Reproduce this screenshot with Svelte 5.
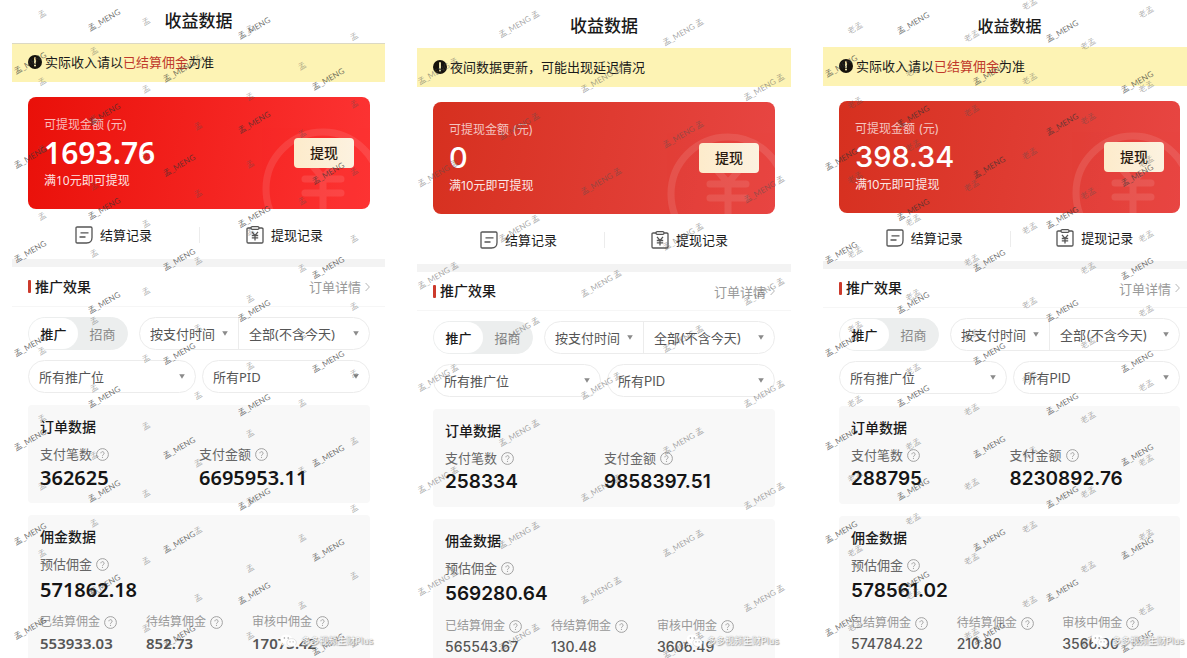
<script lang="ts">
  type MarkSet = {
    text: string;
    tone: 'dark' | 'mid' | 'light';
    x: number;
    y: number;
    cols: number;
    stepX: number;
    stepY: number;
    row: number;
  };

  type Panel = {
    id: string;
    notice: string[];
    balance: string;
    orders: string;
    paid: string;
    estimated: string;
    commissions: { label: string; value: string }[];
    marks: MarkSet[];
  };

  const commissions = (settled: string, pending: string, review: string) => [
    { label: '已结算佣金', value: settled },
    { label: '待结算佣金', value: pending },
    { label: '审核中佣金', value: review }
  ];

  const settledNotice = ['实际收入请以', '已结算佣金', '为准'];

  const panels: Panel[] = [
    {
      id: 'first',
      notice: settledNotice,
      balance: '1693.76',
      orders: '362625',
      paid: '6695953.11',
      estimated: '571862.18',
      commissions: commissions('553933.03', '852.73', '17073.42'),
      marks: [
        { text: '孟_MENG', tone: 'dark', x: 92, y: 20, cols: 2, stepX: 150, stepY: 8, row: 94.2 },
        { text: '孟_MENG', tone: 'dark', x: 18, y: 63, cols: 3, stepX: 149, stepY: 8, row: 94.2 },
        { text: '孟', tone: 'light', x: 30, y: 14, cols: 4, stepX: 104, stepY: 7.5, row: 67.4 },
        { text: '孟', tone: 'light', x: 82, y: 51, cols: 3, stepX: 104, stepY: 7.5, row: 67.4 }
      ]
    },
    {
      id: 'second',
      notice: ['夜间数据更新，可能出现延迟情况'],
      balance: '0',
      orders: '258334',
      paid: '9858397.51',
      estimated: '569280.64',
      commissions: commissions('565543.67', '130.48', '3606.49'),
      marks: [
        { text: '孟_MENG 孟', tone: 'mid', x: 102, y: 24, cols: 2, stepX: 164, stepY: 8, row: 102.2 },
        { text: '孟_MENG 孟', tone: 'mid', x: 21, y: 71, cols: 3, stepX: 163, stepY: 8, row: 102.2 }
      ]
    },
    {
      id: 'third',
      notice: settledNotice,
      balance: '398.34',
      orders: '288795',
      paid: '8230892.76',
      estimated: '578561.02',
      commissions: commissions('574784.22', '210.80', '3566.90'),
      marks: [
        { text: '孟_MENG', tone: 'dark', x: 90, y: 23, cols: 2, stepX: 149, stepY: 8, row: 93.2 },
        { text: '孟_MENG', tone: 'dark', x: 18, y: 66, cols: 3, stepX: 148, stepY: 8, row: 93.2 },
        { text: '老孟', tone: 'light', x: 32, y: 28, cols: 3, stepX: 116.5, stepY: 8, row: 74.7 },
        { text: '老孟', tone: 'light', x: 90, y: -4, cols: 3, stepX: 116.5, stepY: 8, row: 74.7 }
      ]
    }
  ];

  let tabs: Record<string, string> = $state({ first: '推广', second: '推广', third: '推广' });
  let pageHeight = $state(0);

  // only keep marks that fit inside the panel
  function placeMarks(set: MarkSet, height: number) {
    const points: { x: number; y: number }[] = [];
    for (let r = 0; r * set.row < height; r++) {
      for (let c = 0; c < set.cols; c++) {
        const y = set.y + c * set.stepY + r * set.row;
        if (y > 3 && y < height - 8) {
          points.push({ x: set.x + c * set.stepX, y });
        }
      }
    }
    return points;
  }
</script>

{#snippet help(size: number)}
  <svg class="help" width={size} height={size} viewBox="0 0 13 13" aria-hidden="true">
    <circle cx="6.5" cy="6.5" r="5.9" fill="none" stroke="currentColor" stroke-width="0.9" />
    <path d="M4.9 5.3a1.6 1.6 0 1 1 2.5 1.3c-.6.4-.9.6-.9 1.2" fill="none" stroke="currentColor" stroke-width="0.9" />
    <circle cx="6.5" cy="9.3" r="0.6" fill="currentColor" />
  </svg>
{/snippet}

{#snippet picker(label: string, value: string)}
  <span class="picker">
    <select aria-label={label}>
      <option>{value}</option>
    </select>
    <svg class="caret" width="6" height="5" viewBox="0 0 6 5" aria-hidden="true">
      <path d="M0.2 0.3h5.6L3 4.8z" fill="#8a8a8a" />
    </svg>
  </span>
{/snippet}

<main class="page" bind:clientHeight={pageHeight}>
  {#each panels as panel (panel.id)}
    <section class="panel panel-{panel.id}">
      <h1 class="title">收益数据</h1>

      <div class="notice">
        <svg width="14" height="14" viewBox="0 0 14 14" aria-hidden="true">
          <circle cx="7" cy="7" r="7" fill="#15120c" />
          <path d="M7 3v5" stroke="#fdf3b8" stroke-width="1.8" stroke-linecap="round" />
          <circle cx="7" cy="10.6" r="1" fill="#fdf3b8" />
        </svg>
        <p>{#each panel.notice as part, i}<span class:accent={i === 1}>{part}</span>{/each}</p>
      </div>

      <div class="wallet">
        <svg class="coin" width="124" height="124" viewBox="0 0 124 124" aria-hidden="true">
          <circle cx="62" cy="62" r="57" fill="none" stroke="#fff" stroke-width="7" />
          <path d="M43 29l19 22 19-22M44 52h36M44 66h36M62 52v38" fill="none" stroke="#fff" stroke-width="7" stroke-linecap="round" />
        </svg>
        <div class="wallet-text">
          <p class="wallet-label">可提现金额 (元)</p>
          <p class="balance">{panel.balance}</p>
          <p class="wallet-hint">满10元即可提现</p>
        </div>
        <button type="button" class="withdraw">提现</button>
      </div>

      <nav class="links">
        <a href="#settlements">
          <svg width="18" height="18" viewBox="0 0 18 18" fill="none" stroke="#555" stroke-width="1.3" aria-hidden="true">
            <path d="M2.2 1h13.6q1.2 0 1.2 1.2v9.3q0 5.5-5.5 5.5H2.2Q1 17 1 15.8V2.2Q1 1 2.2 1z" />
            <path d="M5.5 6.8h8M4.5 11h6" />
          </svg>
          结算记录
        </a>
        <a href="#withdrawals">
          <svg width="18" height="18" viewBox="0 0 18 18" fill="none" stroke="#555" stroke-width="1.3" aria-hidden="true">
            <path d="M5 2H2.2Q1 2 1 3.2v12.6Q1 17 2.2 17h13.6q1.2 0 1.2-1.2V3.2Q17 2 15.8 2H13" />
            <rect x="5" y="0.7" width="8" height="2.6" rx="1.2" />
            <path d="M6 5.8l3 3.6 3-3.6M5.8 9.5h6.4M5.8 11.8h6.4M9 9.4v5" />
          </svg>
          提现记录
        </a>
      </nav>

      <header class="section-head">
        <h2>推广效果</h2>
        <a href="#orders">
          订单详情
          <svg width="5" height="10" viewBox="0 0 5 10" fill="none" stroke="#b5b5b5" aria-hidden="true">
            <path d="M0.6 1L4.4 5 0.6 9" />
          </svg>
        </a>
      </header>

      <div class="filters">
        <div class="filter-row">
          <div class="tabs">
            {#each ['推广', '招商'] as name}
              <button type="button" class:active={tabs[panel.id] === name} aria-pressed={tabs[panel.id] === name} onclick={() => (tabs[panel.id] = name)}>
                {name}
              </button>
            {/each}
          </div>
          <div class="pill range">
            {@render picker('时间类型', '按支付时间')}
            {@render picker('时间范围', '全部(不含今天)')}
          </div>
        </div>
        <div class="filter-row halves">
          <div class="pill">{@render picker('推广位', '所有推广位')}</div>
          <div class="pill">{@render picker('PID', '所有PID')}</div>
        </div>
      </div>

      <article class="card">
        <h3>订单数据</h3>
        <dl class="two">
          <div>
            <dt>支付笔数{@render help(13)}</dt>
            <dd>{panel.orders}</dd>
          </div>
          <div>
            <dt>支付金额{@render help(13)}</dt>
            <dd>{panel.paid}</dd>
          </div>
        </dl>
      </article>

      <article class="card card-last">
        <h3>佣金数据</h3>
        <dl class="one">
          <div>
            <dt>预估佣金{@render help(13)}</dt>
            <dd>{panel.estimated}</dd>
          </div>
        </dl>
        <dl class="three">
          {#each panel.commissions as item}
            <div>
              <dt>{item.label}{@render help(13)}</dt>
              <dd>{item.value}</dd>
            </div>
          {/each}
        </dl>
      </article>

      <svg class="marks" aria-hidden="true">
        {#each panel.marks as set}
          {#each placeMarks(set, pageHeight) as p}
            <text class={set.tone} transform="translate({p.x} {p.y}) rotate(-30)" text-anchor="middle" dominant-baseline="central">{set.text}</text>
          {/each}
        {/each}
      </svg>

      <p class="brand">
        <svg width="17" height="14" viewBox="0 0 17 14" aria-hidden="true">
          <ellipse cx="6.3" cy="5.3" rx="5.8" ry="4.9" fill="#fff" />
          <path d="M2.6 8.6L2 11.6l3-1.6z" fill="#fff" />
          <circle cx="4.4" cy="4" r="0.8" fill="#999" />
          <circle cx="8.2" cy="4" r="0.8" fill="#999" />
          <ellipse cx="11.6" cy="8.6" rx="4.8" ry="4" fill="#fff" stroke="#ccc" stroke-width="0.5" />
          <path d="M13.4 11.8l2 1.6-.4-2.8z" fill="#fff" />
          <circle cx="10" cy="7.8" r="0.6" fill="#999" />
          <circle cx="13.1" cy="7.8" r="0.6" fill="#999" />
        </svg>
        多多视频生财Plus
      </p>
    </section>
  {/each}
</main>

<style>
  :global(body) {
    margin: 0;
    background: #fff;
  }
  .page {
    display: grid;
    grid-template-columns: 373fr 374fr 364fr;
    column-gap: 32px;
    padding-left: 12px;
    min-height: 100vh;
    font-family: 'Noto Sans', 'Noto Sans CJK SC', sans-serif;
    color: #1a1a1a;
  }
  .page * {
    box-sizing: border-box;
  }
  h1,
  h2,
  h3,
  p,
  dl,
  dd {
    margin: 0;
  }
  a {
    color: inherit;
    text-decoration: none;
  }
  button,
  select {
    margin: 0;
    padding: 0;
    border: 0;
    background: none;
    color: inherit;
    font: inherit;
    cursor: pointer;
  }

  .panel {
    --head: 43px;
    --links: 50px;
    --section: 40px;
    --right: 15px;
    --from: #e91009;
    --to: #fd3434;
    position: relative;
    display: flex;
    flex-direction: column;
    min-width: 0;
    overflow: hidden;
  }
  .panel-second {
    --head: 48px;
    --section: 39px;
    --right: 16px;
    --from: #d6301f;
    --to: #e84643;
    font-family: Inter, 'Noto Sans CJK SC', sans-serif;
  }
  .panel-third {
    --head: 47px;
    --links: 48px;
    --section: 39px;
    --right: 7px;
    --from: #d6301f;
    --to: #e84643;
    font-family: Inter, 'Noto Sans CJK SC', sans-serif;
  }

  .title {
    height: var(--head);
    padding-top: 4px;
    line-height: 34px;
    font-size: 17px;
    font-weight: 500;
    text-align: center;
  }
  .panel-second .title,
  .panel-third .title {
    padding-top: 9px;
  }
  .panel-third .title {
    padding-left: 9px;
    font-size: 16px;
  }
  .notice {
    display: flex;
    align-items: center;
    gap: 3px;
    height: 39px;
    padding: 0 0 2px 16px;
    background: #fdf3b4;
    font-size: 13px;
    line-height: 20px;
  }
  .panel-first .notice {
    border-top: 1px solid #dcd9c4;
  }
  .accent {
    color: #c0392b;
  }

  .wallet {
    position: relative;
    display: flex;
    align-items: center;
    justify-content: space-between;
    margin: 15px var(--right) 0 16px;
    padding: 18px 16px;
    border-radius: 8px;
    background: linear-gradient(100deg, var(--from), var(--to));
    overflow: hidden;
    color: #fff;
    font-size: 12px;
    line-height: 20px;
  }
  .coin {
    position: absolute;
    top: 30px;
    right: -15px;
    opacity: 0.1;
  }
  .wallet-label {
    color: rgba(255, 255, 255, 0.72);
  }
  .wallet-hint {
    color: rgba(255, 255, 255, 0.9);
  }
  .balance {
    font-size: 30px;
    line-height: 36px;
    font-weight: 600;
  }
  .panel-second .balance,
  .panel-third .balance {
    font-size: 29px;
    font-weight: 500;
  }
  .withdraw {
    position: relative;
    width: 60px;
    height: 30px;
    border-radius: 4px;
    background: linear-gradient(90deg, #fdebcb, #fcf2e0);
    color: #2a1a10;
    font-size: 14px;
    font-weight: 500;
  }

  .links {
    display: flex;
    height: var(--links);
    margin: 0 var(--right) 0 16px;
    font-size: 13px;
  }
  .links a {
    position: relative;
    flex: 1;
    display: flex;
    align-items: center;
    justify-content: center;
    gap: 7px;
    padding-top: 1px;
  }
  .links a + a::before {
    content: '';
    position: absolute;
    left: 0;
    top: 18px;
    height: 16px;
    border-left: 1px solid #ececec;
  }

  .section-head {
    display: flex;
    align-items: center;
    justify-content: space-between;
    height: calc(var(--section) + 8px);
    padding: 0 var(--right) 0 16px;
    border-top: 8px solid #f3f3f3;
    border-bottom: 1px solid #f6f6f6;
  }
  .section-head h2 {
    display: flex;
    align-items: center;
    gap: 4px;
    font-size: 14px;
    line-height: 20px;
    font-weight: 500;
  }
  .section-head h2::before {
    content: '';
    width: 3px;
    height: 13px;
    border-radius: 1px;
    background: #cc3a2c;
  }
  .section-head a {
    display: flex;
    align-items: center;
    gap: 4px;
    color: #999;
    font-size: 13px;
  }

  .filters {
    display: grid;
    gap: 10px;
    padding: 10px var(--right) 12px 16px;
    font-size: 13px;
    color: #555;
  }
  .filter-row {
    display: flex;
    gap: 11px;
  }
  .halves {
    gap: 6px;
  }
  .tabs {
    display: flex;
    width: 100px;
    height: 33px;
    border: 1px solid #eceeee;
    border-radius: 17px;
    background: #eceeee;
  }
  .tabs button {
    flex: 1;
    border-radius: 17px;
    color: #888;
  }
  .tabs .active {
    background: #fff;
    color: #1a1a1a;
    font-weight: 500;
  }
  .pill {
    flex: 1;
    display: flex;
    min-width: 0;
    height: 33px;
    border: 1px solid #ececec;
    border-radius: 17px;
  }
  .picker {
    position: relative;
    flex: 1;
    display: flex;
    align-items: center;
    min-width: 0;
  }
  .range .picker:first-child {
    flex: 0 0 99px;
    border-right: 1px solid #ececec;
  }
  .picker select {
    appearance: none;
    width: 100%;
    height: 31px;
    padding: 0 10px;
    outline-offset: -2px;
  }
  .caret {
    position: absolute;
    right: 10px;
    pointer-events: none;
  }

  .card {
    margin: 0 var(--right) 12px 16px;
    padding: 12px 12px 13px;
    border-radius: 4px;
    background: #f8f8f8;
  }
  .card-last {
    flex: 1;
    margin-bottom: 0;
    padding-bottom: 0;
    border-radius: 4px 4px 0 0;
  }
  .card h3 {
    margin-bottom: 7px;
    font-size: 14px;
    line-height: 20px;
    font-weight: 500;
  }
  dl {
    display: grid;
  }
  .two {
    grid-template-columns: 1fr 1fr;
  }
  .three {
    grid-template-columns: repeat(3, 1fr);
    margin-top: 10px;
  }
  dt {
    display: flex;
    align-items: center;
    gap: 4px;
    color: #666;
    font-size: 13px;
    line-height: 20px;
    white-space: nowrap;
  }
  .help {
    color: #999;
  }
  dd {
    margin-top: 2px;
    color: #151515;
    font-size: 20px;
    line-height: 24px;
    font-weight: 600;
  }
  .one dd {
    margin-top: 4px;
  }
  .three dt {
    color: #999;
    font-size: 12px;
  }
  .three dd {
    margin-top: 0;
    color: #555;
    font-size: 15px;
    line-height: 22px;
  }
  .panel-second dd,
  .panel-third dd {
    font-size: 19px;
  }
  .panel-second .three dd,
  .panel-third .three dd {
    font-size: 14px;
    font-weight: 500;
  }

  .marks {
    position: absolute;
    inset: 0;
    width: 100%;
    height: 100%;
    pointer-events: none;
    font-family: Lato, 'Noto Sans CJK SC', sans-serif;
    font-size: 8px;
  }
  .dark {
    fill: rgba(50, 50, 50, 0.7);
  }
  .mid {
    fill: rgba(80, 80, 80, 0.5);
  }
  .light {
    fill: rgba(80, 80, 80, 0.45);
  }

  .brand {
    position: absolute;
    right: 12px;
    bottom: 9px;
    display: flex;
    align-items: center;
    gap: 4px;
    color: #fff;
    font-size: 9px;
    line-height: 16px;
    text-shadow: 0 0 1px #888, 1px 1px 1px #999;
  }
  .panel-third .brand {
    right: 3px;
  }
</style>
